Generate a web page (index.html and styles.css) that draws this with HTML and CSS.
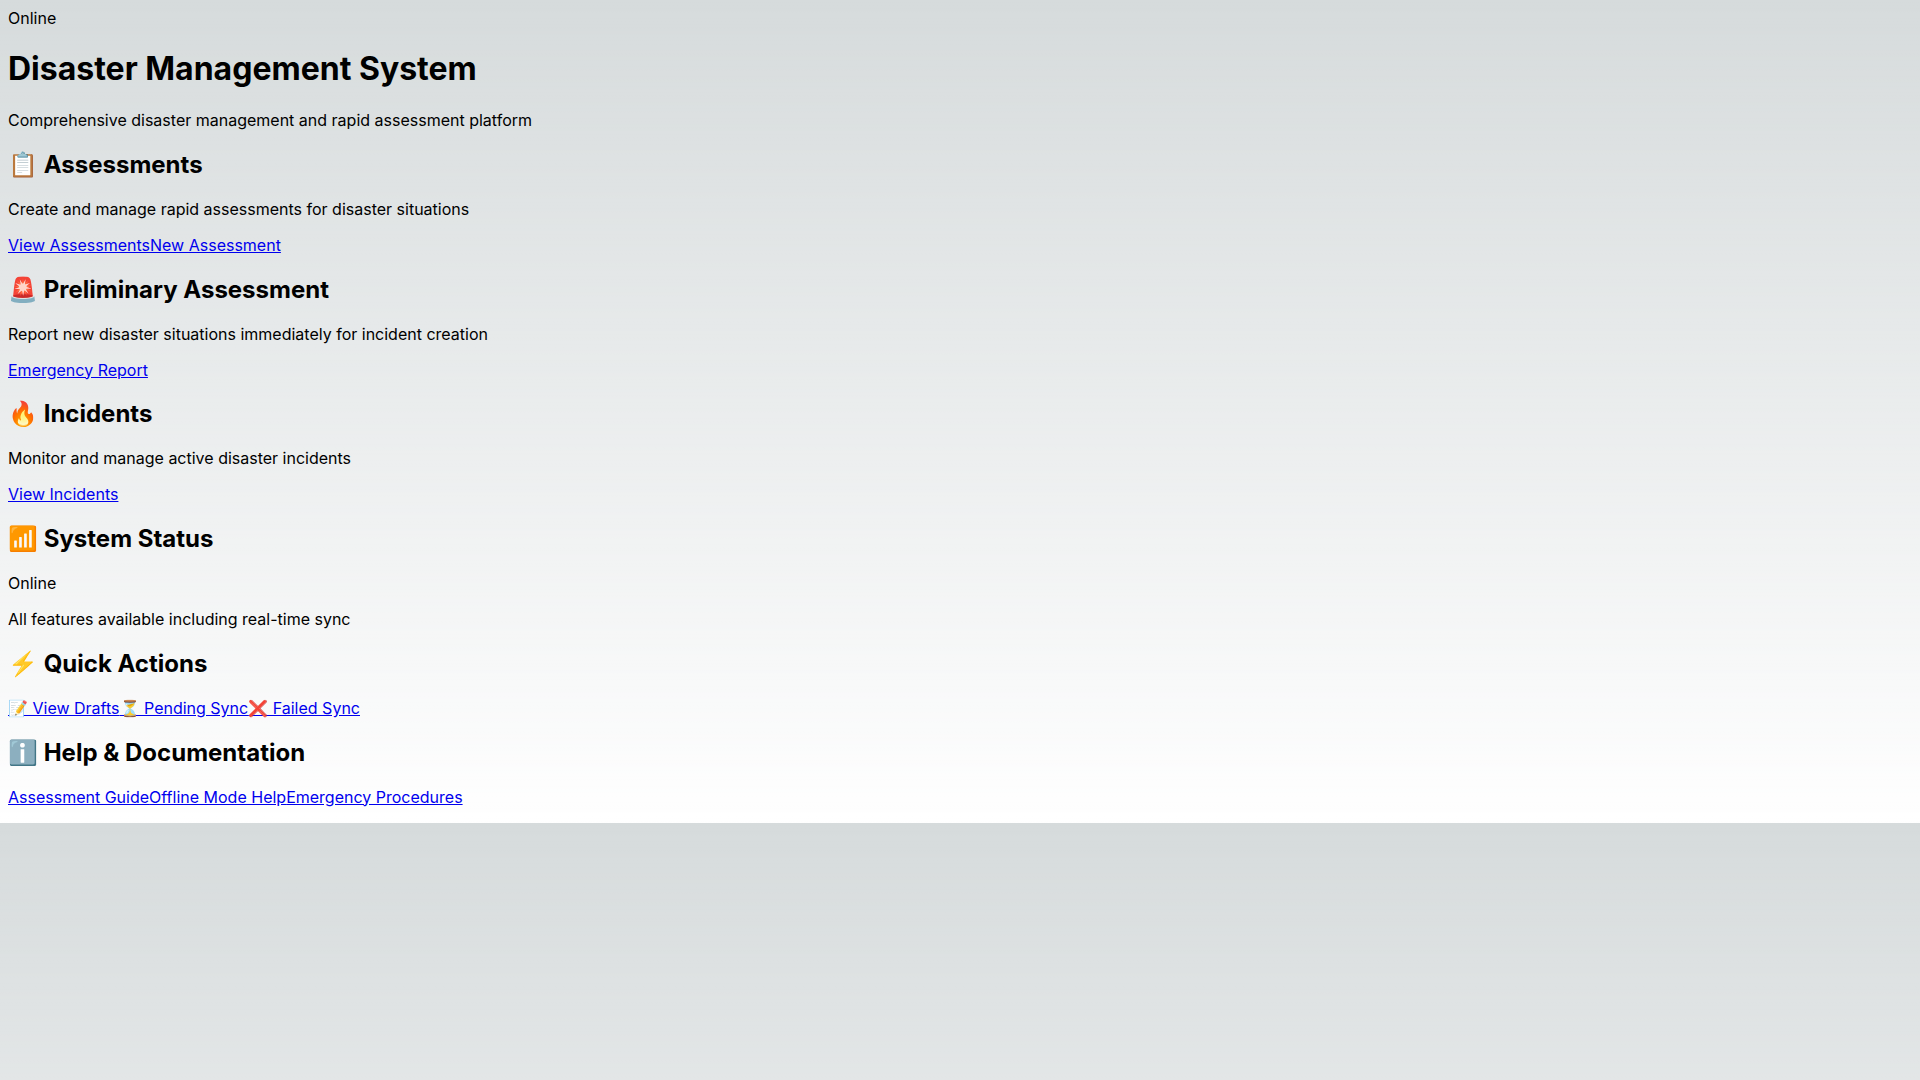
FILE: index.html
```html
<!DOCTYPE html>
<html lang="en">
<head>
<meta charset="utf-8">
<meta name="viewport" content="width=device-width, initial-scale=1">
<title>Disaster Management System</title>
<link rel="stylesheet" href="styles.css">
</head>
<body>
<main>
  <div class="connection">Online</div>
  <header>
    <h1>Disaster Management System</h1>
    <p>Comprehensive disaster management and rapid assessment platform</p>
  </header>
  <section>
    <h2>📋 Assessments</h2>
    <p>Create and manage rapid assessments for disaster situations</p>
    <div class="links"><a href="#assessments">View Assessments</a><a href="#new-assessment">New Assessment</a></div>
  </section>
  <section>
    <h2>🚨 Preliminary Assessment</h2>
    <p>Report new disaster situations immediately for incident creation</p>
    <div class="links"><a href="#emergency-report">Emergency Report</a></div>
  </section>
  <section>
    <h2>🔥 Incidents</h2>
    <p>Monitor and manage active disaster incidents</p>
    <div class="links"><a href="#incidents">View Incidents</a></div>
  </section>
  <section>
    <h2>📶 System Status</h2>
    <div class="status">Online</div>
    <p>All features available including real-time sync</p>
  </section>
  <section>
    <h2>⚡ Quick Actions</h2>
    <div class="links"><a href="#drafts">📝 View Drafts</a><a href="#pending">⏳ Pending Sync</a><a href="#failed">❌ Failed Sync</a></div>
  </section>
  <section>
    <h2>ℹ️ Help &amp; Documentation</h2>
    <div class="links"><a href="#guide">Assessment Guide</a><a href="#offline">Offline Mode Help</a><a href="#procedures">Emergency Procedures</a></div>
  </section>
</main>
</body>
</html>
```

FILE: styles.css
```css
:root {
  --foreground: rgb(0, 0, 0);
  --background-start: rgb(214, 219, 220);
  --background-end: rgb(255, 255, 255);
}

body {
  margin: 8px 8px 16px;
  color: var(--foreground);
  background: linear-gradient(to bottom, transparent, var(--background-end)) var(--background-start);
  font-family: Inter, sans-serif;
}
```
